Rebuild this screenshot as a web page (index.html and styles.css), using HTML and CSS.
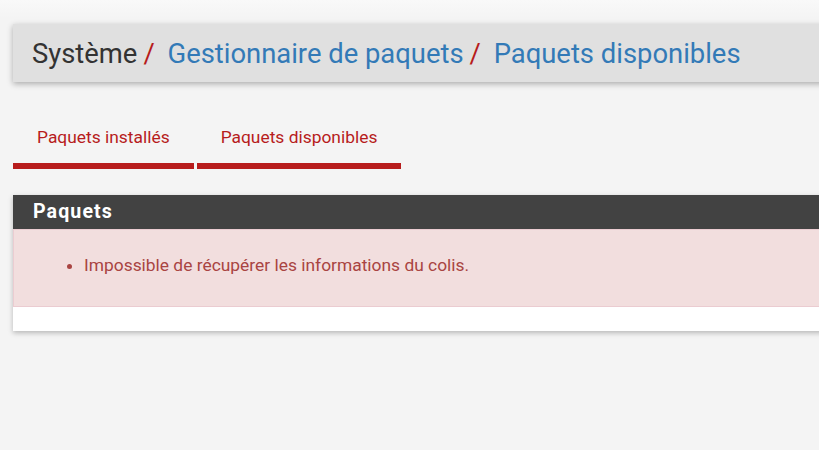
FILE: index.html
```html
<!DOCTYPE html>
<html lang="fr">
<head>
<meta charset="utf-8">
<title>Paquets disponibles</title>
<link rel="stylesheet" href="styles.css">
</head>
<body>
<div class="page">
  <div class="header">
    <h1 class="crumbs">
      <span class="crumb-text">Système</span><span class="sep">/</span>
      <a class="crumb-link" href="#">Gestionnaire de paquets</a><span class="sep">/</span>
      <a class="crumb-link" href="#">Paquets disponibles</a>
    </h1>
  </div>

  <ul class="tabs">
    <li class="tab"><a href="#">Paquets installés</a></li>
    <li class="tab active"><a href="#">Paquets disponibles</a></li>
  </ul>

  <div class="panel">
    <div class="panel-heading"><h2 class="panel-title">Paquets</h2></div>
    <div class="panel-body">
      <div class="alert">
        <ul class="alert-list">
          <li>Impossible de récupérer les informations du colis.</li>
        </ul>
      </div>
    </div>
  </div>
</div>
</body>
</html>
```

FILE: styles.css
```css
html, body {
  margin: 0;
  padding: 0;
  overflow: hidden;
}
body {
  background: #f4f4f4;
  background-image: linear-gradient(to bottom, #f9f9f9 0, #f4f4f4 18px);
  font-family: Roboto, "Liberation Sans", sans-serif;
  color: #333;
  height: 450px;
}
.page {
  width: 1100px;
  padding: 24px 0 0 13px;
}
.header {
  background: #e0e0e0;
  box-shadow: 0 2px 6px rgba(0, 0, 0, 0.3);
  height: 58px;
  display: flex;
  align-items: center;
  padding-left: 19px;
}
.crumbs {
  margin: 0;
  font-size: 27.4px;
  font-weight: 400;
  line-height: 1;
  padding-top: 3px;
}
.crumb-text { color: #333; }
.sep {
  color: #b71c1c;
  margin: 0 6px 0 6px;
}
.crumb-link {
  color: #337ab7;
  text-decoration: none;
}
.tabs {
  list-style: none;
  margin: 0;
  padding: 0;
  display: flex;
  gap: 3px;
  margin-top: 34px;
}
.tab a {
  display: block;
  padding: 11px 24px 16px;
  font-size: 17.4px;
  line-height: 20px;
  color: #b71c1c;
  text-decoration: none;
  border-bottom: 6px solid #b71c1c;
}
.panel {
  margin-top: 26px;
  background: #fff;
  box-shadow: 0 2px 5px rgba(0, 0, 0, 0.25);
}
.panel-heading {
  background: #424242;
  height: 34px;
  display: flex;
  align-items: center;
  padding-left: 20px;
}
.panel-title {
  margin: 0;
  color: #fff;
  font-size: 19.6px;
  font-weight: 700;
  letter-spacing: 1.1px;
  line-height: 1;
}
.panel-body {
  padding-bottom: 24px;
}
.alert {
  background: #f2dede;
  border: 1px solid #ebccd1;
  color: #a94442;
  height: 76px;
  padding: 0 0 0 30px;
}
.alert-list {
  margin: 0;
  padding: 23px 0 0 40px;
  font-size: 17.4px;
  line-height: 24px;
}
```
